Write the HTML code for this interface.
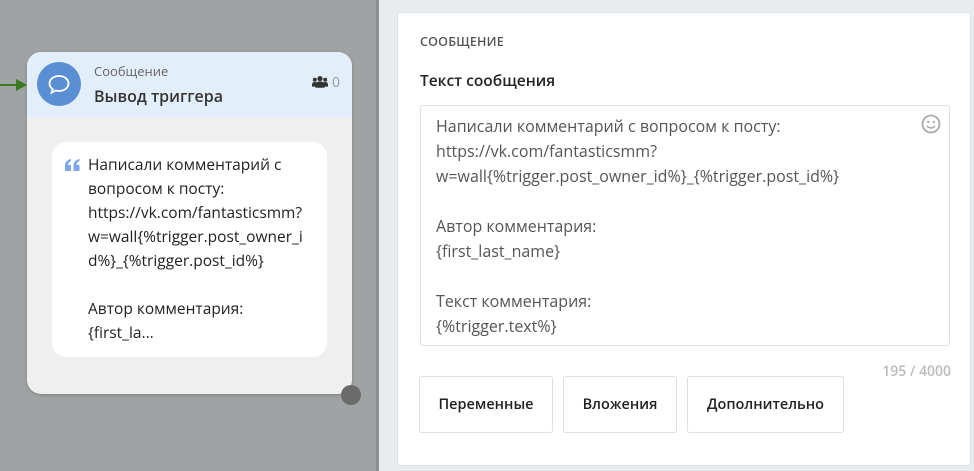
<!DOCTYPE html>
<html><head><meta charset="utf-8"><style>
*{box-sizing:border-box;margin:0;padding:0}
body{width:974px;height:471px;overflow:hidden;background:#e8ecee;font-family:"Open Sans","Liberation Sans","DejaVu Sans",sans-serif;position:relative}
.canvas{position:absolute;left:0;top:0;width:376px;height:471px;background:#a0a3a3}
.stripe{position:absolute;left:376px;top:0;width:3px;height:471px;background:#8c8f90}
.node{position:absolute;left:27px;top:52px;width:325px;height:342px;background:#efefef;border-radius:14px;overflow:hidden;box-shadow:0 1px 3px rgba(0,0,0,.2)}
.nh{height:65px;background:#e3eefb;position:relative}
.circ{position:absolute;left:10px;top:10px;width:44px;height:44px;border-radius:50%;background:#5b8fd4}
.sub{position:absolute;left:67px;top:10px;font-size:13px;color:#666}
.ttl{position:absolute;left:67px;top:33px;font-size:16px;font-weight:600;color:#333}
.cnt{position:absolute;right:12px;top:21px;font-size:14px;color:#999}
.bubble{position:absolute;left:25px;top:90px;width:275px;height:215px;background:#fff;border-radius:14px;padding:10px 0 0 36px;font-size:15.5px;line-height:24px;color:#222}
.q{position:absolute;left:13px;top:17px}
.dot{position:absolute;left:341px;top:385px;width:20px;height:20px;border-radius:50%;background:#6b6b6b}
.arrow{position:absolute;left:0;top:84px;width:22px;height:2px;background:#3b7a1e}
.card{position:absolute;left:397px;top:12px;width:574px;height:454px;background:#fff;border:1px solid #dde1e3;border-radius:3px}
.h{position:absolute;left:22px;top:20px;font-size:12.5px;font-weight:600;color:#555;letter-spacing:.2px}
.lbl{position:absolute;left:22px;top:56px;font-size:15.5px;font-weight:600;color:#222}
.ta{position:absolute;left:22px;top:92px;width:530px;height:241px;border:1px solid #dcdfe3;border-radius:3px;padding:8px 0 0 15px;font-size:16px;line-height:25px;color:#555;white-space:pre}
.smile{position:absolute;right:8px;top:8px}
.counter{position:absolute;right:19px;top:349px;font-size:14px;font-weight:600;color:#bbb}
.btn{position:absolute;top:363px;height:57px;border:1px solid #dcdfe3;border-radius:3px;font-size:14.5px;font-weight:600;color:#222;display:flex;align-items:center;justify-content:center}
</style></head><body>
<div class="canvas"></div><div class="stripe"></div>
<div class="arrow"></div>
<svg style="position:absolute;left:16px;top:79px" width="12" height="12"><path d="M0 0 L11 6 L0 12 Z" fill="#3b7a1e"/></svg>
<div class="node">
 <div class="nh">
  <div class="circ"><svg width="44" height="44" viewBox="0 0 44 44"><path d="M22 14c-5.5 0-9.5 3.3-9.5 7.5 0 2.3 1.2 4.3 3.2 5.6l-1 3.6 4-2.2c1 .3 2.1.5 3.3.5 5.5 0 9.5-3.3 9.5-7.5S27.5 14 22 14z" fill="none" stroke="#fff" stroke-width="1.8"/></svg></div>
  <div class="sub">Сообщение</div>
  <div class="ttl">Вывод триггера</div>
  <div class="cnt"><svg width="16" height="14" viewBox="0 0 14 12" style="vertical-align:-2px"><circle cx="7" cy="3" r="2.3" fill="#333"/><circle cx="2.5" cy="4" r="1.7" fill="#333"/><circle cx="11.5" cy="4" r="1.7" fill="#333"/><path d="M3 11v-2.5c0-1.5 1.5-3 4-3s4 1.5 4 3V11z" fill="#333"/><path d="M0 10V8c0-1 1-2 2.5-2S5 7 5 8v2zM9 10V8c0-1 1-2 2.5-2S14 7 14 8v2z" fill="#333"/></svg> 0</div>
 </div>
 <div class="bubble"><svg class="q" width="15" height="12" viewBox="0 0 15 12"><path d="M0 12V7C0 3 2 1 6 0v2C4 3 3 4 3 6h3v6zM8.5 12V7c0-4 2-6 6-7v2c-2 1-3 2-3 4h3v6z" fill="#7aa7ec"/></svg>Написали комментарий с<br>вопросом к посту:<br>https://vk.com/fantasticsmm?<br>w=wall{%trigger.post_owner_i<br>d%}_{%trigger.post_id%}<br><br>Автор комментария:<br>{first_la...</div>
</div>
<div class="dot"></div>
<div class="card">
 <div class="h">СООБЩЕНИЕ</div>
 <div class="lbl">Текст сообщения</div>
 <div class="ta">Написали комментарий с вопросом к посту:
https://vk.com/fantasticsmm?
w=wall{%trigger.post_owner_id%}_{%trigger.post_id%}

Автор комментария:
{first_last_name}

Текст комментария:
{%trigger.text%}<svg class="smile" width="20" height="20" viewBox="0 0 20 20"><circle cx="10" cy="10" r="8.5" fill="none" stroke="#aaa" stroke-width="1.8"/><circle cx="7.3" cy="8" r="1.2" fill="#aaa"/><circle cx="12.7" cy="8" r="1.2" fill="#aaa"/><path d="M6 12c2 2.5 6 2.5 8 0" fill="none" stroke="#aaa" stroke-width="1.6"/></svg></div>
 <div class="counter">195 / 4000</div>
 <div class="btn" style="left:21px;width:134px">Переменные</div>
 <div class="btn" style="left:165px;width:114px">Вложения</div>
 <div class="btn" style="left:289px;width:157px">Дополнительно</div>
</div>
</body></html>
